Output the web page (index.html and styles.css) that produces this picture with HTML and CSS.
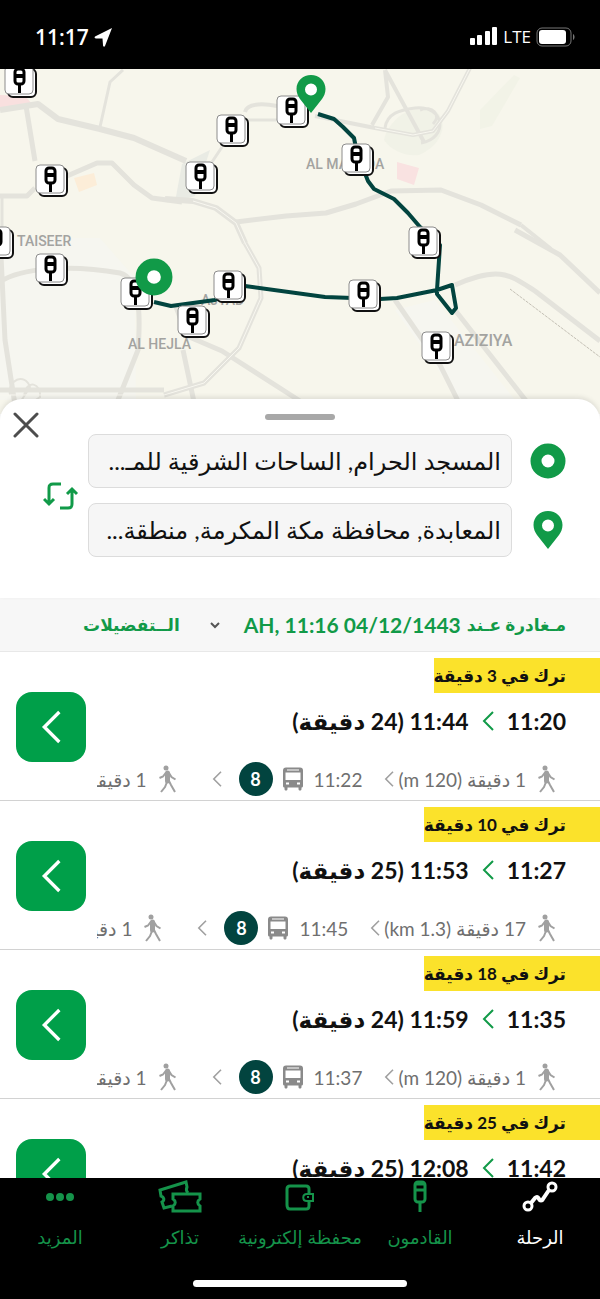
FILE: index.html
```html
<!DOCTYPE html>
<html lang="ar" dir="rtl">
<head>
    <meta charset="UTF-8">
    <meta name="viewport" content="width=device-width, initial-scale=1.0">
    <title>الرحلة</title>
    <link rel="stylesheet" href="styles.css">
</head>
<body>
    <!-- shared icons -->
    <svg class="sprite" aria-hidden="true">
        <symbol id="stop" viewBox="0 0 34 34">
            <rect x="4" y="4" width="28" height="28" rx="5" fill="#fff" stroke="#111" stroke-width="2"/>
            <rect x="1" y="1" width="28" height="28" rx="4" fill="#fff" stroke="#8c8c8c"/>
            <rect x="11" y="4" width="9" height="15" rx="3" fill="#fff" stroke="#000" stroke-width="3"/>
            <path d="M11 11h9" stroke="#000" stroke-width="4"/>
            <path d="M15.500 19v9" stroke="#000" stroke-width="3"/>
        </symbol>
        <symbol id="ring" viewBox="0 0 36 36">
            <circle cx="18" cy="18" r="12" fill="none" stroke="#119a48" stroke-width="11"/>
        </symbol>
        <symbol id="pin" viewBox="0 0 30 38">
            <path fill="#119a48" fill-rule="evenodd" d="M15 0C7 0 0.500 6 0.500 14c0 4 1.500 7 3.500 10l11 14 11-14c2-3 3.500-6 3.500-10C29.500 6 23 0 15 0zM15 8.500a6 6 0 1 1 0 12 6 6 0 0 1 0-12z"/>
        </symbol>
        <symbol id="arrow" viewBox="0 0 12 20">
            <path d="M11 1L2 10l9 9" fill="none" stroke="currentColor" stroke-width="2"/>
        </symbol>
        <symbol id="walk" viewBox="0 0 18 28">
            <circle cx="7" cy="3" r="2.500" fill="currentColor"/>
            <path d="M8.500 8v8" fill="none" stroke="currentColor" stroke-width="5" stroke-linecap="round"/>
            <path d="M7 7.500l-3 4-3.500 1.500M10 8l2.500 4 4 2.500M8 17l-2 5-4 5M10 16l2 4 4 7" fill="none" stroke="currentColor" stroke-width="2"/>
        </symbol>
        <symbol id="bus" viewBox="0 0 20 24">
            <path fill="currentColor" fill-rule="evenodd" d="M3 0.500h14c2 0 3 1 3 3V19c0 1-1 1.500-1.500 1.500V22c0 2-3 2-3 0v-1.500h-11V22c0 2-3 2-3 0v-1.500C1 20.500 0 20 0 19V3.500c0-2 1-3 3-3zM4 2.500v1h12v-1zM2.500 5.500v7.500h15V5.500zM3 15.500v2h3v-2zM14 15.500v2h3v-2z"/>
        </symbol>
    </svg>

    <header class="status-bar" dir="ltr">
        <div class="status-group">
            <span class="clock">11:17</span>
            <svg width="19" height="20" viewBox="0 0 19 20"><path d="M18 1L1 9.500c-1 1 0 2 1 2h6.500L9 18c0 2 1.500 2 2 1z" fill="#fff"/></svg>
        </div>
        <div class="status-group">
            <svg width="28" height="19" viewBox="0 0 28 19" fill="#fff"><rect y="11" width="5" height="7" rx="1"/><rect x="7" y="8" width="5" height="10" rx="1"/><rect x="15" y="4" width="5" height="14" rx="1"/><rect x="22" width="5" height="18" rx="1"/></svg>
            <span class="network">LTE</span>
            <svg width="40" height="20" viewBox="0 0 40 20"><rect x="1" y="1" width="34" height="18" rx="5" fill="none" stroke="#777" stroke-width="1"/><rect x="3" y="3" width="27" height="14" rx="3" fill="#fff"/><path d="M37 7c2 1 2 5 0 6z" fill="#777"/></svg>
        </div>
    </header>

    <main>
        <svg class="map" viewBox="0 69 600 345" preserveAspectRatio="xMidYMin slice" role="img" aria-label="خريطة الرحلة">
            <rect y="69" width="600" height="345" fill="#f7f6ec"/>
            <!-- land areas -->
            <path d="M0 95l25 1 8 9-33 6z" fill="#f9e0df"/>
            <path d="M74 178l20-5 3 12-18 7z" fill="#fcedd8"/>
            <path d="M397 162l22 6-5 17-17-6z" fill="#f9e2e1"/>
            <path d="M182 164l28-14-15 46-20 6z" fill="#e9ebe4"/>
            <path d="M480 110l34-35 6 3-28 48-12 3z" fill="#f2f3e7"/>
            <path d="M384 140c3-15 22-38 50-30 16 10 9 35-15 45-14 2-28-5-35-15z" fill="#f1f2e7"/>
            <path d="M0 238h100l35 40 1 122H0z" fill="#f6f6f0"/>
            <path d="M395 310l40-10 80 100h-55z" fill="#f6f6f0"/>

            <g fill="none" stroke="#e4e3dc" stroke-linejoin="round">
                <path stroke-width="6" d="M0 110l38-6 20 15 42 10 34 9 52 23M165 199l28 2 23 7 20 15 9 20"/>
                <path stroke-width="5" d="M245 243l14 25 2 30-22 50-35 35-40 12M26 106l9 55M0 196h27l8-8M67 176l30-13h15l22 22 18 13 30 4M236 222l50-6 40-3 30-9 35-13 50-1 40 15 40 20"/>
                <path stroke-width="4" d="M521 225l30 24"/>
                <path stroke-width="3" d="M2 196v55M123 70l-13 12-10 45M244 120h40M210 165l12-18"/>
                <path stroke-width="4" d="M245 112c2-10 22-8 32-6M315 116l60 12 38 7 20-4 15-20 22-43M385 70l39 72M372 125l16-28-3-27"/>
                <path stroke-width="3" d="M385 128c2-15 15-18 30-20 30-3 34 30 6 35M420 110c12-5 22 5 13 14"/>
                <path stroke-width="5" d="M0 282c20-14 70-18 120-9 22 6 20 50 18 77l-20 50M0 235l5 105 10 65M183 350l11 52M175 304l12 32 35 15 78 50"/>
                <path stroke-width="2" d="M10 395c-3-15 15-23 20-8l-9 14M24 397c2-20 18-13 16 0l-14 10"/>
                <path stroke-width="5" d="M0 390h164"/>
                <path stroke-width="5" d="M395 300l45 65 20 40M455 310l72 92M455 285c45-20 55-10 80 6l65 50M515 230l45 25 40 38"/>
                <path stroke="#f8f7f0" stroke-width="1" d="M193 201l23 7 20 15 9 20 14 25 2 30-22 50-35 35-40 12H0M375 128l38 7 20-4 15-20 22-43"/>
            </g>
            <path d="M510 289l90 68" stroke="#c4c0b5" stroke-dasharray="3 1"/>

            <g class="map-label">
                <text x="306" y="169">AL MAABDA</text>
                <text x="17" y="246">TAISEER</text>
                <text x="201" y="305">AJYAD</text>
                <text x="128" y="349">AL HEJLA</text>
                <text class="large" x="454" y="346">AZIZIYA</text>
            </g>

            <path d="M318 114l16 5 9 8 11 11 3 15 11 28 6 8 20 10 14 14 12 14 20 18-2 30-1 15 15-5 4 23-4 5-15-19v-4l-40 8-17 1-55-2-80-11-30 14-44 6-17-4" fill="none" stroke="#02443f" stroke-width="4" stroke-linejoin="round"/>

            <use href="#stop" x="4" y="65" width="34" height="34"/>
            <use href="#stop" x="216" y="114" width="34" height="34"/>
            <use href="#stop" x="276" y="95" width="34" height="34"/>
            <use href="#stop" x="35" y="164" width="34" height="34"/>
            <use href="#stop" x="185" y="161" width="34" height="34"/>
            <use href="#stop" x="-19" y="226" width="34" height="34"/>
            <use href="#stop" x="35" y="253" width="34" height="34"/>
            <use href="#stop" x="120" y="277" width="34" height="34"/>
            <use href="#stop" x="177" y="305" width="34" height="34"/>
            <use href="#stop" x="213" y="270" width="34" height="34"/>
            <use href="#stop" x="341" y="143" width="34" height="34"/>
            <use href="#stop" x="408" y="226" width="34" height="34"/>
            <use href="#stop" x="348" y="279" width="34" height="34"/>
            <use href="#stop" x="421" y="331" width="34" height="34"/>
            <circle cx="154" cy="277" r="12" fill="#fff"/>
            <use href="#ring" x="135" y="258" width="38" height="38"/>
            <circle cx="311" cy="90" r="8" fill="#fff"/>
            <use href="#pin" x="296" y="75" width="30" height="38"/>
        </svg>

        <section class="sheet">
            <div class="handle"></div>
            <button class="close" type="button" aria-label="إغلاق">
                <svg width="26" height="26" viewBox="0 0 26 26"><path d="M2 2l22 22M24 2L2 24" stroke="#4d4d4d" stroke-width="3" stroke-linecap="round"/></svg>
            </button>
            <form class="places">
                <div class="fields">
                    <div class="field">
                        <label for="from" aria-label="من"><svg width="36" height="36"><use href="#ring"/></svg></label>
                        <input id="from" type="text" value="المسجد الحرام, الساحات الشرقية للمـ...">
                    </div>
                    <div class="field">
                        <label for="to" aria-label="إلى"><svg width="36" height="38"><use href="#pin"/></svg></label>
                        <input id="to" type="text" value="المعابدة, محافظة مكة المكرمة, منطقة...">
                    </div>
                </div>
                <button class="swap" type="button" aria-label="تبديل">
                    <svg width="36" height="30" viewBox="0 0 36 30" fill="none" stroke="#119a48" stroke-width="3"><path d="M18 3h-8c-3 0-4 1-4 4v16M1 18l5 5 5-5M17 27h8c3 0 4-1 4-4V8M24 13l5-5 5 5"/></svg>
                </button>
            </form>
        </section>

        <div class="filters">
            <button class="depart" type="button">مـغادرة عـند <span dir="ltr">AH, 11:16 04/12/1443</span>
                <svg width="10" height="8" viewBox="0 0 10 8"><path d="M1 2l4 4 4-4" fill="none" stroke="#555" stroke-width="2"/></svg>
            </button>
            <button type="button">الــتفضيلات</button>
        </div>

        <ul class="routes">
            <li class="route">
                <div class="info">
                    <span class="leave">ترك في 3 دقيقة</span>
                    <h2 class="times">11:20 <svg width="12" height="20"><use href="#arrow"/></svg> <span>11:44 (24 دقيقة)</span></h2>
                    <div class="steps">
                        <svg class="walk" width="18" height="28"><use href="#walk"/></svg>
                        <span>1 دقيقة (120 m)</span>
                        <svg class="next" width="10" height="16"><use href="#arrow"/></svg>
                        <span>11:22</span>
                        <svg class="bus" width="20" height="24"><use href="#bus"/></svg>
                        <b class="line">8</b>
                        <svg class="then" width="10" height="16"><use href="#arrow"/></svg>
                        <svg class="walk" width="18" height="28"><use href="#walk"/></svg>
                        <span>1 دقيقة</span>
                    </div>
                </div>
                <button class="open" type="button" aria-label="عرض الرحلة"><svg width="20" height="34"><use href="#arrow"/></svg></button>
            </li>
            <li class="route">
                <div class="info">
                    <span class="leave">ترك في 10 دقيقة</span>
                    <h2 class="times">11:27 <svg width="12" height="20"><use href="#arrow"/></svg> <span>11:53 (25 دقيقة)</span></h2>
                    <div class="steps">
                        <svg class="walk" width="18" height="28"><use href="#walk"/></svg>
                        <span>17 دقيقة (1.3 km)</span>
                        <svg class="next" width="10" height="16"><use href="#arrow"/></svg>
                        <span>11:45</span>
                        <svg class="bus" width="20" height="24"><use href="#bus"/></svg>
                        <b class="line">8</b>
                        <svg class="then" width="10" height="16"><use href="#arrow"/></svg>
                        <svg class="walk" width="18" height="28"><use href="#walk"/></svg>
                        <span>1 دقيقة</span>
                    </div>
                </div>
                <button class="open" type="button" aria-label="عرض الرحلة"><svg width="20" height="34"><use href="#arrow"/></svg></button>
            </li>
            <li class="route">
                <div class="info">
                    <span class="leave">ترك في 18 دقيقة</span>
                    <h2 class="times">11:35 <svg width="12" height="20"><use href="#arrow"/></svg> <span>11:59 (24 دقيقة)</span></h2>
                    <div class="steps">
                        <svg class="walk" width="18" height="28"><use href="#walk"/></svg>
                        <span>1 دقيقة (120 m)</span>
                        <svg class="next" width="10" height="16"><use href="#arrow"/></svg>
                        <span>11:37</span>
                        <svg class="bus" width="20" height="24"><use href="#bus"/></svg>
                        <b class="line">8</b>
                        <svg class="then" width="10" height="16"><use href="#arrow"/></svg>
                        <svg class="walk" width="18" height="28"><use href="#walk"/></svg>
                        <span>1 دقيقة</span>
                    </div>
                </div>
                <button class="open" type="button" aria-label="عرض الرحلة"><svg width="20" height="34"><use href="#arrow"/></svg></button>
            </li>
            <li class="route">
                <div class="info">
                    <span class="leave">ترك في 25 دقيقة</span>
                    <h2 class="times">11:42 <svg width="12" height="20"><use href="#arrow"/></svg> <span>12:08 (25 دقيقة)</span></h2>
                </div>
                <button class="open" type="button" aria-label="عرض الرحلة"><svg width="20" height="34"><use href="#arrow"/></svg></button>
            </li>
        </ul>
    </main>

    <footer>
        <nav class="tabs">
            <a class="active" href="#trip">
                <svg width="36" height="36" viewBox="0 0 36 36" fill="none" stroke="currentColor" stroke-width="3"><circle cx="6" cy="28" r="4"/><circle cx="30" cy="9" r="4"/><path stroke-width="4" d="M9 25l4-5c2-2 3-1 4 1s3 2 4 0l6-9"/></svg>
                الرحلة
            </a>
            <a href="#arrivals">
                <svg width="36" height="36" viewBox="0 0 36 36" fill="none" stroke="currentColor" stroke-width="3"><rect x="13" y="4" width="10" height="20" rx="3"/><path d="M13 12h10M14 6h8M18 24v10"/></svg>
                القادمون
            </a>
            <a href="#wallet">
                <svg width="36" height="36" viewBox="0 0 36 36" fill="none" stroke="currentColor" stroke-width="3"><path d="M27 15v-4c0-2-1-3-3-3H8C6 8 5 9 5 11v16c0 3 1 4 3 4h16c2 0 3-1 3-3v-5"/><path stroke-width="2" d="M31 16h-6c-5 0-5 7 0 7h6zM25 19h2"/></svg>
                محفظة إلكترونية
            </a>
            <a href="#tickets">
                <svg width="44" height="36" viewBox="0 0 44 36" fill="none" stroke="currentColor" stroke-width="3"><path d="M14 28l-8 2-2-6c3-2 2-5-1-6L2 12l26-8 1 5c-1 2-1 4 1 6"/><path d="M15 16h27v5c-3 2-3 5 0 7v5H15v-5c3-2 3-5 0-7z"/></svg>
                تذاكر
            </a>
            <a href="#more">
                <svg width="36" height="36" viewBox="0 0 36 36" fill="currentColor"><circle cx="8" cy="19" r="4"/><circle cx="18" cy="19" r="4"/><circle cx="28" cy="19" r="4"/></svg>
                المزيد
            </a>
        </nav>
        <div class="home-bar"></div>
    </footer>
</body>
</html>
```
FILE: styles.css
```css
* {
    box-sizing: border-box;
}
body {
    margin: 0;
    height: 100vh;
    display: flex;
    flex-direction: column;
    background: #fff;
    color: #111;
    font-family: Lato, "DejaVu Sans", sans-serif;
}
button {
    border: none;
    background: none;
    padding: 0;
    font: inherit;
    color: inherit;
    cursor: pointer;
}
svg {
    display: block;
    flex-shrink: 0;
}
.sprite {
    position: absolute;
    width: 0;
    height: 0;
}

/* phone status bar */
.status-bar {
    flex-shrink: 0;
    display: flex;
    justify-content: space-between;
    align-items: center;
    height: 69px;
    padding: 4px 24px 0 35px;
    background: #000;
    color: #fff;
}
.status-group {
    display: flex;
    align-items: center;
    gap: 5px;
}
.clock {
    font-family: "Open Sans", sans-serif;
    font-size: 21px;
    font-weight: 600;
}
.network {
    font-family: "Open Sans", sans-serif;
    font-size: 17px;
}

main {
    flex: 1;
    min-height: 0;
    display: flex;
    flex-direction: column;
    overflow: hidden;
}
.map {
    width: 100%;
    height: 345px;
    direction: ltr;
}
.map-label {
    fill: #a3a3a0;
    font-family: Roboto, sans-serif;
    font-size: 14px;
    font-weight: 500;
}
.map-label .large {
    font-size: 16px;
}

/* bottom sheet */
.sheet {
    flex-shrink: 0;
    position: relative;
    margin-top: -15px;
    padding: 15px 0 41px;
    border-radius: 22px 22px 0 0;
    background: #fff;
    box-shadow: 0 -2px 5px rgba(0, 0, 0, 0.1);
}
.handle {
    width: 70px;
    height: 6px;
    margin: 0 auto 14px;
    border-radius: 3px;
    background: #a8a8a8;
}
.close {
    position: absolute;
    top: 13px;
    left: 13px;
}
.places {
    display: flex;
    align-items: center;
    gap: 9px;
    padding: 0 34px 0 43px;
}
.fields {
    flex: 1;
    display: flex;
    flex-direction: column;
    gap: 15px;
}
.field {
    display: flex;
    align-items: center;
    gap: 18px;
}
.field input {
    flex: 1;
    min-width: 0;
    height: 54px;
    padding: 0 10px;
    border: 1px solid #dcdcdc;
    border-radius: 8px;
    background: #f6f6f6;
    color: #111;
    font-family: inherit;
    font-size: 24px;
}

.filters {
    flex-shrink: 0;
    display: flex;
    align-items: center;
    gap: 30px;
    height: 54px;
    padding: 0 34px;
    border-bottom: 1px solid #e8e8e8;
    background: #f7f7f7;
    color: #119a48;
    font-size: 17px;
    font-weight: bold;
}
.depart {
    display: flex;
    align-items: center;
    gap: 6px;
}
.depart svg {
    margin-right: 18px;
}
.depart span {
    font-size: 21px;
}

/* route list */
.routes {
    margin: 0;
    padding: 0;
    list-style: none;
}
.route {
    display: flex;
    align-items: flex-start;
    gap: 11px;
    padding-left: 16px;
    border-bottom: 1px solid #d2d2d2;
}
.info {
    flex: 1;
    min-width: 0;
    height: 148px;
    padding-top: 6px;
}
.leave {
    display: inline-block;
    height: 35px;
    padding-right: 34px;
    background: #fbe22b;
    font-size: 17px;
    font-weight: bold;
    line-height: 35px;
}
.times {
    display: flex;
    align-items: center;
    gap: 13px;
    height: 28px;
    margin: 14px 34px 0 0;
    font-size: 23px;
    font-weight: bold;
}
.times svg {
    color: #119a48;
}
.steps {
    display: flex;
    align-items: center;
    height: 36px;
    margin: 26px 44px 0 0;
    overflow: hidden;
    color: #6f6f6f;
    font-size: 19px;
    white-space: nowrap;
}
.steps svg {
    color: #a0a0a0;
}
.steps .walk {
    margin-left: 12px;
}
.steps .next {
    margin: 0 4px 0 22px;
}
.steps .bus {
    margin: 0 11px 0 10px;
    color: #8a8a8a;
}
.steps .then {
    margin: 0 17px 0 35px;
}
.line {
    flex-shrink: 0;
    width: 34px;
    height: 34px;
    border-radius: 50%;
    background: #02443f;
    color: #fff;
    font-size: 18px;
    line-height: 34px;
    text-align: center;
}
.open {
    display: flex;
    align-items: center;
    justify-content: center;
    width: 70px;
    height: 70px;
    margin-top: 40px;
    border-radius: 16px;
    background: #009f49;
    color: #fff;
}

/* bottom tabs */
footer {
    flex-shrink: 0;
    padding-bottom: 12px;
    background: #000;
}
.tabs {
    display: flex;
    height: 102px;
}
.tabs a {
    flex: 1;
    min-width: 0;
    display: flex;
    flex-direction: column;
    align-items: center;
    gap: 12px;
    color: #15934a;
    font-size: 18px;
    text-decoration: none;
    white-space: nowrap;
}
.tabs .active {
    color: #fff;
}
.home-bar {
    width: 214px;
    height: 7px;
    margin: 0 auto;
    border-radius: 4px;
    background: #fff;
}
```
